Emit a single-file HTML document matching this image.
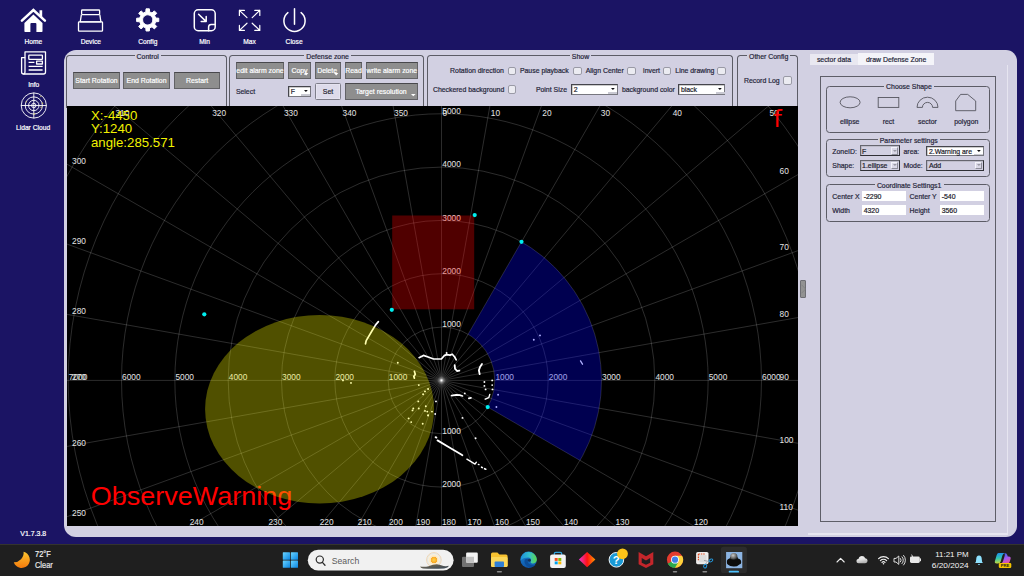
<!DOCTYPE html>
<html><head><meta charset="utf-8"><title>Lidar</title>
<style>
html,body{margin:0;padding:0;}
body{width:1024px;height:576px;overflow:hidden;background:#1b1464;position:relative;font-family:"Liberation Sans",sans-serif;}
.a{position:absolute;box-sizing:border-box;}
.t{position:absolute;white-space:nowrap;transform-origin:0 50%;-webkit-text-stroke:0.2px currentColor;}
.gb{position:absolute;box-sizing:border-box;border:1px solid #5c5c66;border-radius:3.5px;}
.btn{position:absolute;box-sizing:border-box;background:#8e8e8e;border:1px solid #626266;border-top-color:#48484c;}
.cb{position:absolute;box-sizing:border-box;background:#ebebf1;border:1px solid #9a9aa6;border-radius:2px;}
.cmb{position:absolute;box-sizing:border-box;background:#fff;border:1px solid #45454c;border-right-color:#77777f;border-bottom-color:#77777f;box-shadow:inset 0.5px 0.5px 0 #999;}
.cmbd{position:absolute;box-sizing:border-box;background:#d2d0e2;border:1px solid #66666f;border-right-color:#303036;border-bottom-color:#303036;box-shadow:inset 0.6px 0.6px 0 #a9a9b4;}
.inp{position:absolute;box-sizing:border-box;background:#fff;}
svg{position:absolute;overflow:visible;}
</style></head><body>

<svg width="1024" height="140" style="left:0;top:0" viewBox="0 0 1024 140">
<path d="M21.9 20.7 L33.4 10 L44.9 20.7" fill="none" stroke="#fff" stroke-width="2.5" stroke-linecap="round" stroke-linejoin="miter"/>
<g fill="#fff" stroke="none">
<path d="M39.5 10.3 H42.2 V17.4 L39.5 14.8 Z"/>
<path d="M24.4 23 L33.4 14.6 L42.5 23 V31.2 Q42.5 31.9 41.8 31.9 H36.4 V24 Q36.4 23 35.4 23 H31.4 Q30.4 23 30.4 24 V31.9 H25.1 Q24.4 31.9 24.4 31.2 Z"/>
</g>
<g fill="none" stroke="#fff" stroke-width="1.3" stroke-linejoin="round">
<rect x="81.6" y="10" width="18" height="4.6" rx="0.8"/>
<path d="M81.4 14.6 L80.2 21.8 H100.9 L99.8 14.6"/>
<rect x="78.5" y="21.8" width="24" height="9.4" rx="0.8"/>
</g>
<path d="M145.83 11.92 L146.03 8.83 L149.37 8.83 L149.57 11.92 L152.02 12.93 L154.35 10.89 L156.71 13.25 L154.67 15.58 L155.68 18.03 L158.77 18.23 L158.77 21.57 L155.68 21.77 L154.67 24.22 L156.71 26.55 L154.35 28.91 L152.02 26.87 L149.57 27.88 L149.37 30.97 L146.03 30.97 L145.83 27.88 L143.38 26.87 L141.05 28.91 L138.69 26.55 L140.73 24.22 L139.72 21.77 L136.63 21.57 L136.63 18.23 L139.72 18.03 L140.73 15.58 L138.69 13.25 L141.05 10.89 L143.38 12.93 Z M147.70 14.80 a5.1 5.1 0 1 0 0.01 0 Z" fill="#fff" fill-rule="evenodd" stroke="#fff" stroke-width="1.0" stroke-linejoin="round"/>
<g fill="none" stroke="#fff" stroke-width="1.5" stroke-linecap="round" stroke-linejoin="round">
<rect x="194.3" y="9.8" width="20.9" height="20.9" rx="3.8"/>
<path d="M198.6 14.2 L206 21.4 M206.2 16.6 V21.6 H201.2"/>
<path d="M215.2 24.4 H211.2 Q208.6 24.4 208.6 27 V30.7"/>
</g>
<g fill="none" stroke="#fff" stroke-width="1.2" stroke-linecap="round" stroke-linejoin="round">
<path d="M247.0 17.6 L239.4 10.4 M239.4 10.4 H244.4 M239.4 10.4 V15.4"/>
<path d="M252.2 17.6 L259.8 10.4 M259.8 10.4 H254.8 M259.8 10.4 V15.4"/>
<path d="M247.0 23.2 L239.4 30.4 M239.4 30.4 H244.4 M239.4 30.4 V25.4"/>
<path d="M252.2 23.2 L259.8 30.4 M259.8 30.4 H254.8 M259.8 30.4 V25.4"/>
</g>
<g fill="none" stroke="#fff" stroke-width="1.5" stroke-linecap="round">
<path d="M287.9 12.6 A10.6 10.6 0 1 0 301.1 12.6"/>
<path d="M294.5 8.8 V24.3"/>
</g>
<g fill="none" stroke="#fff" stroke-width="1.3" stroke-linejoin="round">
<path d="M25 51.9 H45.5 V72 Q45.5 74 43.5 74 H23.6 Q21.6 74 21.6 72 V57.6 H25 Z"/>
<path d="M25 57.6 V71.5 Q25 74 23.4 74"/>
<rect x="28.8" y="55.1" width="13.6" height="4.2" rx="0.6"/>
<rect x="36.6" y="61.2" width="5.8" height="2.8"/>
<path d="M28.6 62.4 H34.4 M28.6 66.4 H42.6 M28.6 70 H42.6"/>
</g>
<g fill="none" stroke="#fff" stroke-width="0.9">
<circle cx="33.8" cy="105.5" r="12.6"/>
<circle cx="33.8" cy="105.5" r="8.6"/>
<circle cx="33.8" cy="105.5" r="5.2"/>
<circle cx="33.8" cy="105.5" r="2.2"/>
<path d="M21 105.5 H46.6 M33.8 92.7 V118.3"/>
</g>
<g fill="#e8d44a"><circle cx="26.2" cy="101.8" r="0.6"/><circle cx="42.6" cy="103.2" r="0.6"/><circle cx="41" cy="107.2" r="0.6"/><circle cx="34.3" cy="113.9" r="0.6"/><circle cx="40.8" cy="96.6" r="0.5"/></g>
</svg>
<span class="t" style="left:24.53px;top:37.71px;font-size:6.65px;line-height:7.98px;color:#ffffff;">Home</span>
<span class="t" style="left:80.64px;top:37.71px;font-size:6.65px;line-height:7.98px;color:#ffffff;">Device</span>
<span class="t" style="left:138.19px;top:37.71px;font-size:6.65px;line-height:7.98px;color:#ffffff;">Config</span>
<span class="t" style="left:199.14px;top:37.71px;font-size:6.65px;line-height:7.98px;color:#ffffff;">Min</span>
<span class="t" style="left:243.22px;top:37.71px;font-size:6.65px;line-height:7.98px;color:#ffffff;">Max</span>
<span class="t" style="left:285.60px;top:37.71px;font-size:6.65px;line-height:7.98px;color:#ffffff;">Close</span>
<span class="t" style="left:28.15px;top:80.61px;font-size:6.65px;line-height:7.98px;color:#ffffff;">Info</span>
<span class="t" style="left:15.97px;top:123.78px;font-size:6.70px;line-height:8.04px;color:#ffffff;">Lidar Cloud</span>
<span class="t" style="left:20.36px;top:530.13px;font-size:6.95px;line-height:8.34px;color:#ffffff;">V1.7.3.8</span>
<div class="a" style="left:63.60px;top:49.70px;width:953.20px;height:487.30px;background:#d2d0e2;border-radius:12px 11px 11px 12px;"></div>
<div class="gb" style="left:66.30px;top:55.20px;width:160.50px;height:52.40px;border-bottom:none;border-radius:3.5px 3.5px 0 0;"></div>
<div class="a" style="left:134.55px;top:51.20px;width:26.31px;height:8.00px;background:#d2d0e2;"></div>
<span class="t" style="left:136.55px;top:52.85px;font-size:6.92px;line-height:8.30px;color:#26263a;">Control</span>
<div class="gb" style="left:229.00px;top:55.20px;width:195.20px;height:52.40px;border-bottom:none;border-radius:3.5px 3.5px 0 0;"></div>
<div class="a" style="left:304.25px;top:51.20px;width:46.70px;height:8.00px;background:#d2d0e2;"></div>
<span class="t" style="left:306.25px;top:52.85px;font-size:6.92px;line-height:8.30px;color:#26263a;">Defense zone</span>
<div class="gb" style="left:427.00px;top:55.20px;width:305.50px;height:52.40px;border-bottom:none;border-radius:3.5px 3.5px 0 0;"></div>
<div class="a" style="left:569.85px;top:51.20px;width:21.31px;height:8.00px;background:#d2d0e2;"></div>
<span class="t" style="left:571.85px;top:52.85px;font-size:6.92px;line-height:8.30px;color:#26263a;">Show</span>
<div class="gb" style="left:737.20px;top:55.20px;width:61.00px;height:52.40px;border-bottom:none;border-radius:3.5px 3.5px 0 0;"></div>
<div class="a" style="left:747.09px;top:51.20px;width:43.23px;height:8.00px;background:#d2d0e2;"></div>
<span class="t" style="left:749.09px;top:52.85px;font-size:6.92px;line-height:8.30px;color:#26263a;">Other Config</span>
<div class="btn" style="left:73.20px;top:72.00px;width:46.60px;height:16.80px;"></div>
<span class="t" style="left:75.35px;top:77.35px;font-size:6.92px;line-height:8.30px;color:#fff;">Start Rotation</span>
<div class="btn" style="left:122.90px;top:72.00px;width:47.30px;height:16.80px;"></div>
<span class="t" style="left:126.55px;top:77.35px;font-size:6.92px;line-height:8.30px;color:#fff;">End Rotation</span>
<div class="btn" style="left:173.90px;top:72.00px;width:46.40px;height:16.80px;"></div>
<span class="t" style="left:185.95px;top:77.35px;font-size:6.92px;line-height:8.30px;color:#fff;">Restart</span>
<div class="btn" style="left:235.70px;top:62.00px;width:48.60px;height:16.80px;"></div>
<span class="t" style="left:236.35px;top:67.35px;font-size:6.92px;line-height:8.30px;color:#fff;">edit alarm zone</span>
<div class="btn" style="left:288.20px;top:62.00px;width:22.60px;height:16.80px;"></div>
<span class="t" style="left:291.42px;top:67.35px;font-size:6.92px;line-height:8.30px;color:#fff;">Copy</span>
<svg width="4.4" height="2.6" style="left:303.88px;top:72.76px" viewBox="0 0 4.4 2.6"><path d="M0 0 H4.4 L2.20 2.6 Z" fill="#fff"/></svg>
<div class="btn" style="left:314.60px;top:62.00px;width:26.70px;height:16.80px;"></div>
<span class="t" style="left:317.15px;top:67.35px;font-size:6.92px;line-height:8.30px;color:#fff;">Delete</span>
<svg width="4.4" height="2.6" style="left:334.38px;top:72.76px" viewBox="0 0 4.4 2.6"><path d="M0 0 H4.4 L2.20 2.6 Z" fill="#fff"/></svg>
<div class="btn" style="left:345.20px;top:62.00px;width:16.60px;height:16.80px;"></div>
<span class="t" style="left:345.23px;top:67.35px;font-size:6.92px;line-height:8.30px;color:#fff;">Read</span>
<div class="btn" style="left:365.90px;top:62.00px;width:51.90px;height:16.80px;"></div>
<span class="t" style="left:366.47px;top:67.35px;font-size:6.92px;line-height:8.30px;color:#fff;">write alarm zone</span>
<span class="t" style="left:235.90px;top:87.55px;font-size:6.92px;line-height:8.30px;color:#26263a;">Select</span>
<div class="cmb" style="left:288.20px;top:86.00px;width:22.60px;height:10.80px;"></div>
<span class="t" style="left:290.80px;top:88.45px;font-size:6.92px;line-height:8.30px;color:#22222c;">F</span>
<svg width="4" height="3" style="left:303.70px;top:90.40px" viewBox="0 0 4 3"><path d="M0 0 H3.8 L1.9 2.1 Z" fill="#101014"/></svg>
<div class="a" style="left:300.80px;top:94.40px;width:9px;height:1.4px;background:#c9c9d2"></div>
<div class="a" style="left:314.60px;top:82.50px;width:26.90px;height:17.30px;background:#dddbea;border:1px solid #7e7e8a;border-radius:1.5px;box-shadow:inset 0 0 0 0.6px #ebeaf3;"></div>
<span class="t" style="left:322.86px;top:88.10px;font-size:6.92px;line-height:8.30px;color:#22222c;">Set</span>
<div class="btn" style="left:345.20px;top:82.50px;width:72.60px;height:17.30px;"></div>
<span class="t" style="left:355.52px;top:88.10px;font-size:6.92px;line-height:8.30px;color:#fff;">Target resolution</span>
<svg width="4.6" height="2.3" style="left:410.64px;top:94.09px" viewBox="0 0 4.6 2.3"><path d="M0 0 H4.6 L2.30 2.3 Z" fill="#fff"/></svg>
<span class="t" style="left:450.10px;top:67.45px;font-size:6.92px;line-height:8.30px;color:#26263a;">Rotation direction</span>
<div class="cb" style="left:507.80px;top:66.60px;width:8.40px;height:8.60px;"></div>
<span class="t" style="left:519.90px;top:67.45px;font-size:6.92px;line-height:8.30px;color:#26263a;">Pause playback</span>
<div class="cb" style="left:573.40px;top:66.60px;width:8.40px;height:8.60px;"></div>
<span class="t" style="left:585.70px;top:67.45px;font-size:6.92px;line-height:8.30px;color:#26263a;">Align Center</span>
<div class="cb" style="left:627.20px;top:66.60px;width:8.40px;height:8.60px;"></div>
<span class="t" style="left:643.10px;top:67.45px;font-size:6.92px;line-height:8.30px;color:#26263a;">invert</span>
<div class="cb" style="left:663.00px;top:66.60px;width:8.40px;height:8.60px;"></div>
<span class="t" style="left:675.30px;top:67.45px;font-size:6.92px;line-height:8.30px;color:#26263a;">Line drawing</span>
<div class="cb" style="left:717.40px;top:66.60px;width:8.40px;height:8.60px;"></div>
<span class="t" style="left:432.90px;top:86.25px;font-size:6.92px;line-height:8.30px;color:#26263a;">Checkered background</span>
<div class="cb" style="left:507.80px;top:85.00px;width:8.40px;height:8.60px;"></div>
<span class="t" style="left:535.90px;top:86.25px;font-size:6.92px;line-height:8.30px;color:#26263a;">Point Size</span>
<div class="cmb" style="left:571.10px;top:83.60px;width:46.80px;height:11.10px;"></div>
<span class="t" style="left:573.70px;top:86.20px;font-size:6.92px;line-height:8.30px;color:#22222c;">2</span>
<svg width="4" height="3" style="left:610.80px;top:88.15px" viewBox="0 0 4 3"><path d="M0 0 H3.8 L1.9 2.1 Z" fill="#101014"/></svg>
<div class="a" style="left:607.90px;top:92.30px;width:9px;height:1.4px;background:#c9c9d2"></div>
<span class="t" style="left:621.90px;top:86.25px;font-size:6.92px;line-height:8.30px;color:#26263a;">background color</span>
<div class="cmb" style="left:678.30px;top:83.60px;width:47.20px;height:11.10px;"></div>
<span class="t" style="left:680.90px;top:86.20px;font-size:6.92px;line-height:8.30px;color:#22222c;">black</span>
<svg width="4" height="3" style="left:718.40px;top:88.15px" viewBox="0 0 4 3"><path d="M0 0 H3.8 L1.9 2.1 Z" fill="#101014"/></svg>
<div class="a" style="left:715.50px;top:92.30px;width:9px;height:1.4px;background:#c9c9d2"></div>
<span class="t" style="left:744.00px;top:76.95px;font-size:6.92px;line-height:8.30px;color:#26263a;">Record Log</span>
<div class="cb" style="left:783.20px;top:76.40px;width:8.60px;height:8.60px;"></div>
<div class="a" style="left:800.30px;top:280.30px;width:5.60px;height:17.50px;background:#929292;border:1px solid #6e6e74;border-radius:1px;"></div>
<svg width="6" height="10" style="left:800.6px;top:284px" viewBox="0 0 6 10"><path d="M0.6 0.8 L4.6 5 L0.6 9.2" fill="none" stroke="#7c7c7c" stroke-width="0.7"/></svg>
<div class="a" style="left:809.80px;top:53.80px;width:48.60px;height:10.80px;background:#e9e8f1;"></div>
<span class="t" style="left:816.88px;top:55.95px;font-size:6.92px;line-height:8.30px;color:#26263a;">sector data</span>
<div class="a" style="left:858.40px;top:52.60px;width:75.40px;height:12.00px;background:#f4f4f9;"></div>
<span class="t" style="left:866.01px;top:55.55px;font-size:6.92px;line-height:8.30px;color:#26263a;">draw Defense Zone</span>
<div class="a" style="left:1006.80px;top:65.00px;width:1.50px;height:469.60px;background:#e6e5f0;"></div>
<div class="a" style="left:808.00px;top:533.20px;width:200.30px;height:1.40px;background:#e6e5f0;"></div>
<div class="a" style="left:820.00px;top:76.40px;width:176.20px;height:445.40px;border:1px solid #5e5e68;"></div>
<div class="gb" style="left:825.80px;top:85.80px;width:164.20px;height:46.80px;"></div>
<div class="a" style="left:884.20px;top:81.80px;width:49.60px;height:8.00px;background:#d2d0e2;"></div>
<span class="t" style="left:886.11px;top:83.45px;font-size:6.92px;line-height:8.30px;color:#26263a;">Choose Shape</span>
<svg width="180" height="30" style="left:820px;top:90px" viewBox="820 90 180 30"><g fill="none" stroke="#55555e" stroke-width="0.9">
<ellipse cx="850.1" cy="102.3" rx="10" ry="5.5"/>
<rect x="878.2" y="97.5" width="20.6" height="9.9"/>
<path d="M917 107.4 A10.5 10.2 0 0 1 938 107.4 H932.6 A5.1 5 0 0 0 922.4 107.4 Z"/>
<path d="M955.7 110.7 V101 L960.6 94.4 H967.7 L975.7 101 V110.7 Z"/>
</g></svg>
<span class="t" style="left:839.89px;top:118.35px;font-size:6.92px;line-height:8.30px;color:#26263a;">ellipse</span>
<span class="t" style="left:882.63px;top:118.35px;font-size:6.92px;line-height:8.30px;color:#26263a;">rect</span>
<span class="t" style="left:917.98px;top:118.35px;font-size:6.92px;line-height:8.30px;color:#26263a;">sector</span>
<span class="t" style="left:954.18px;top:118.35px;font-size:6.92px;line-height:8.30px;color:#26263a;">polygon</span>
<div class="gb" style="left:825.80px;top:139.00px;width:164.20px;height:38.00px;"></div>
<div class="a" style="left:877.55px;top:135.00px;width:62.50px;height:8.00px;background:#d2d0e2;"></div>
<span class="t" style="left:879.76px;top:136.65px;font-size:6.92px;line-height:8.30px;color:#26263a;">Parameter settings</span>
<span class="t" style="left:832.30px;top:147.55px;font-size:6.92px;line-height:8.30px;color:#26263a;">ZoneID:</span>
<div class="cmbd" style="left:859.50px;top:145.00px;width:40.10px;height:11.20px;"></div>
<span class="t" style="left:862.10px;top:147.65px;font-size:6.92px;line-height:8.30px;color:#22222c;">F</span>
<div class="a" style="left:891.10px;top:146.60px;width:7.10px;height:8.20px;background:#dad8e7;border:1px solid #f4f4fa;border-right-color:#8c8c98;border-bottom-color:#8c8c98;"></div>
<svg width="4" height="3" style="left:892.80px;top:149.60px" viewBox="0 0 4 3"><path d="M0 0 H3.8 L1.9 2.1 Z" fill="#9a9aa4"/></svg>
<span class="t" style="left:903.50px;top:147.55px;font-size:6.92px;line-height:8.30px;color:#26263a;">area:</span>
<div class="cmb" style="left:926.30px;top:145.60px;width:57.30px;height:10.80px;"></div>
<span class="t" style="left:928.90px;top:148.05px;font-size:6.92px;line-height:8.30px;color:#22222c;">2.Warning are</span>
<svg width="4" height="3" style="left:976.50px;top:150.00px" viewBox="0 0 4 3"><path d="M0 0 H3.8 L1.9 2.1 Z" fill="#101014"/></svg>
<div class="a" style="left:973.60px;top:154.00px;width:9px;height:1.4px;background:#c9c9d2"></div>
<span class="t" style="left:832.30px;top:161.95px;font-size:6.92px;line-height:8.30px;color:#26263a;">Shape:</span>
<div class="cmbd" style="left:859.50px;top:160.00px;width:40.10px;height:10.90px;"></div>
<span class="t" style="left:862.10px;top:161.80px;font-size:6.92px;line-height:8.30px;color:#22222c;">1.ellipse</span>
<div class="a" style="left:891.10px;top:161.60px;width:7.10px;height:7.90px;background:#dad8e7;border:1px solid #f4f4fa;border-right-color:#8c8c98;border-bottom-color:#8c8c98;"></div>
<svg width="4" height="3" style="left:892.80px;top:164.45px" viewBox="0 0 4 3"><path d="M0 0 H3.8 L1.9 2.1 Z" fill="#9a9aa4"/></svg>
<span class="t" style="left:903.50px;top:161.95px;font-size:6.92px;line-height:8.30px;color:#26263a;">Mode:</span>
<div class="cmbd" style="left:926.30px;top:160.00px;width:57.30px;height:10.90px;"></div>
<span class="t" style="left:928.90px;top:161.80px;font-size:6.92px;line-height:8.30px;color:#22222c;">Add</span>
<div class="a" style="left:975.10px;top:161.60px;width:7.10px;height:7.90px;background:#dad8e7;border:1px solid #f4f4fa;border-right-color:#8c8c98;border-bottom-color:#8c8c98;"></div>
<svg width="4" height="3" style="left:976.80px;top:164.45px" viewBox="0 0 4 3"><path d="M0 0 H3.8 L1.9 2.1 Z" fill="#9a9aa4"/></svg>
<div class="gb" style="left:825.80px;top:184.10px;width:164.20px;height:38.30px;"></div>
<div class="a" style="left:874.60px;top:180.10px;width:69.20px;height:8.00px;background:#d2d0e2;"></div>
<span class="t" style="left:876.89px;top:181.75px;font-size:6.92px;line-height:8.30px;color:#26263a;">Coordinate Settings1</span>
<span class="t" style="left:832.30px;top:192.55px;font-size:6.92px;line-height:8.30px;color:#26263a;">Center X</span>
<div class="inp" style="left:862.10px;top:190.60px;width:43.80px;height:10.80px;"></div>
<span class="t" style="left:863.70px;top:192.55px;font-size:6.92px;line-height:8.30px;color:#22222c;">-2290</span>
<span class="t" style="left:909.60px;top:192.55px;font-size:6.92px;line-height:8.30px;color:#26263a;">Center Y</span>
<div class="inp" style="left:940.10px;top:190.60px;width:43.70px;height:10.80px;"></div>
<span class="t" style="left:941.70px;top:192.55px;font-size:6.92px;line-height:8.30px;color:#22222c;">-540</span>
<span class="t" style="left:832.30px;top:206.65px;font-size:6.92px;line-height:8.30px;color:#26263a;">Width</span>
<div class="inp" style="left:862.10px;top:204.60px;width:43.80px;height:10.80px;"></div>
<span class="t" style="left:863.70px;top:206.55px;font-size:6.92px;line-height:8.30px;color:#22222c;">4320</span>
<span class="t" style="left:909.60px;top:206.65px;font-size:6.92px;line-height:8.30px;color:#26263a;">Height</span>
<div class="inp" style="left:940.10px;top:204.60px;width:43.70px;height:10.80px;"></div>
<span class="t" style="left:941.70px;top:206.55px;font-size:6.92px;line-height:8.30px;color:#22222c;">3560</span>
<svg width="730.90" height="420.00" style="left:67.00px;top:105.60px;overflow:hidden;background:#000" viewBox="67.00 105.60 730.90 420.00">
<g fill="none" stroke="rgba(255,255,255,0.22)" stroke-width="0.8">
<circle cx="441.50" cy="380.00" r="53.33"/>
<circle cx="441.50" cy="380.00" r="106.66"/>
<circle cx="441.50" cy="380.00" r="159.99"/>
<circle cx="441.50" cy="380.00" r="213.32"/>
<circle cx="441.50" cy="380.00" r="266.65"/>
<circle cx="441.50" cy="380.00" r="319.98"/>
<circle cx="441.50" cy="380.00" r="373.31"/>
<circle cx="441.50" cy="380.00" r="426.64"/>
<circle cx="441.50" cy="380.00" r="479.97"/>
<path d="M441.50 380.00 L441.50 -220.00 M441.50 380.00 L545.69 -210.88 M441.50 380.00 L646.71 -183.82 M441.50 380.00 L741.50 -139.62 M441.50 380.00 L827.17 -79.63 M441.50 380.00 L901.13 -5.67 M441.50 380.00 L961.12 80.00 M441.50 380.00 L1005.32 174.79 M441.50 380.00 L1032.38 275.81 M441.50 380.00 L1041.50 380.00 M441.50 380.00 L1032.38 484.19 M441.50 380.00 L1005.32 585.21 M441.50 380.00 L961.12 680.00 M441.50 380.00 L901.13 765.67 M441.50 380.00 L827.17 839.63 M441.50 380.00 L741.50 899.62 M441.50 380.00 L646.71 943.82 M441.50 380.00 L545.69 970.88 M441.50 380.00 L441.50 980.00 M441.50 380.00 L337.31 970.88 M441.50 380.00 L236.29 943.82 M441.50 380.00 L141.50 899.62 M441.50 380.00 L55.83 839.63 M441.50 380.00 L-18.13 765.67 M441.50 380.00 L-78.12 680.00 M441.50 380.00 L-122.32 585.21 M441.50 380.00 L-149.38 484.19 M441.50 380.00 L-158.50 380.00 M441.50 380.00 L-149.38 275.81 M441.50 380.00 L-122.32 174.79 M441.50 380.00 L-78.12 80.00 M441.50 380.00 L-18.13 -5.67 M441.50 380.00 L55.83 -79.63 M441.50 380.00 L141.50 -139.62 M441.50 380.00 L236.29 -183.82 M441.50 380.00 L337.31 -210.88 "/>
</g>
<defs><radialGradient id="cg"><stop offset="0" stop-color="#fff" stop-opacity="0.9"/><stop offset="0.35" stop-color="#fff" stop-opacity="0.25"/><stop offset="1" stop-color="#fff" stop-opacity="0"/></radialGradient></defs>
<circle cx="441.50" cy="380.00" r="4.5" fill="url(#cg)"/>
<g font-family="Liberation Sans, sans-serif" font-size="8.35" fill="#e4e4e4">
<text x="495.43" y="379.80" text-anchor="start">1000</text>
<text x="388.77" y="379.80" text-anchor="start">1000</text>
<text x="442.30" y="326.97" text-anchor="start">1000</text>
<text x="442.30" y="433.63" text-anchor="start">1000</text>
<text x="548.76" y="379.80" text-anchor="start">2000</text>
<text x="335.44" y="379.80" text-anchor="start">2000</text>
<text x="442.30" y="273.64" text-anchor="start">2000</text>
<text x="442.30" y="486.96" text-anchor="start">2000</text>
<text x="602.09" y="379.80" text-anchor="start">3000</text>
<text x="282.11" y="379.80" text-anchor="start">3000</text>
<text x="442.30" y="220.31" text-anchor="start">3000</text>
<text x="655.42" y="379.80" text-anchor="start">4000</text>
<text x="228.78" y="379.80" text-anchor="start">4000</text>
<text x="442.30" y="166.98" text-anchor="start">4000</text>
<text x="708.75" y="379.80" text-anchor="start">5000</text>
<text x="175.45" y="379.80" text-anchor="start">5000</text>
<text x="442.30" y="113.65" text-anchor="start">5000</text>
<text x="762.08" y="379.80" text-anchor="start">6000</text>
<text x="122.12" y="379.80" text-anchor="start">6000</text>
<text x="68.79" y="379.80" text-anchor="start">7000</text>
<text x="442.40" y="116.00" text-anchor="start">0</text>
<text x="490.78" y="116.00" text-anchor="start">10</text>
<text x="542.27" y="116.00" text-anchor="start">20</text>
<text x="600.82" y="116.00" text-anchor="start">30</text>
<text x="672.65" y="116.00" text-anchor="start">40</text>
<text x="769.42" y="116.00" text-anchor="start">50</text>
<text x="779.60" y="173.83" text-anchor="start">60</text>
<text x="779.60" y="249.88" text-anchor="start">70</text>
<text x="779.60" y="316.76" text-anchor="start">80</text>
<text x="779.60" y="379.60" text-anchor="start">90</text>
<text x="779.60" y="442.44" text-anchor="start">100</text>
<text x="779.60" y="509.32" text-anchor="start">110</text>
<text x="694.09" y="525.00" text-anchor="start">120</text>
<text x="615.42" y="525.00" text-anchor="start">130</text>
<text x="564.07" y="525.00" text-anchor="start">140</text>
<text x="525.96" y="525.00" text-anchor="start">150</text>
<text x="494.89" y="525.00" text-anchor="start">160</text>
<text x="467.57" y="525.00" text-anchor="start">170</text>
<text x="441.90" y="525.00" text-anchor="start">180</text>
<text x="416.23" y="525.00" text-anchor="start">190</text>
<text x="388.91" y="525.00" text-anchor="start">200</text>
<text x="357.84" y="525.00" text-anchor="start">210</text>
<text x="319.73" y="525.00" text-anchor="start">220</text>
<text x="268.38" y="525.00" text-anchor="start">230</text>
<text x="189.71" y="525.00" text-anchor="start">240</text>
<text x="72.10" y="516.01" text-anchor="start">250</text>
<text x="72.10" y="445.73" text-anchor="start">260</text>
<text x="72.10" y="379.70" text-anchor="start">270</text>
<text x="72.10" y="313.67" text-anchor="start">280</text>
<text x="72.10" y="243.39" text-anchor="start">290</text>
<text x="72.10" y="163.48" text-anchor="start">300</text>
<text x="115.38" y="116.00" text-anchor="start">310</text>
<text x="212.15" y="116.00" text-anchor="start">320</text>
<text x="283.98" y="116.00" text-anchor="start">330</text>
<text x="342.53" y="116.00" text-anchor="start">340</text>
<text x="394.02" y="116.00" text-anchor="start">350</text>
</g>
<polyline points="419.1,357.3 423.4,355.0 428.1,356.6 433.6,358.6 441.4,358.6 444.5,355.0 446.9,354.2 450.0,354.7 452.3,353.8 454.7,356.6 456.2,359.4" fill="none" stroke="#fff" stroke-width="1.7" stroke-linecap="round" stroke-linejoin="round"/>
<polyline points="454.7,364.7 455.0,368.3 457.0,370.6 459.4,370.3" fill="none" stroke="#fff" stroke-width="1.8" stroke-linecap="round" stroke-linejoin="round"/>
<polyline points="482.0,363.6 480.0,366.7 478.9,369.8 479.7,373.8" fill="none" stroke="#fff" stroke-width="1.8" stroke-linecap="round" stroke-linejoin="round"/>
<polyline points="489.8,394.0 488.8,397.2 485.2,398.8" fill="none" stroke="#fff" stroke-width="1.4" stroke-linecap="round" stroke-linejoin="round"/>
<polyline points="451.6,395.3 456.2,394.4 460.2,394.8 462.5,395.6" fill="none" stroke="#fff" stroke-width="1.7" stroke-linecap="round" stroke-linejoin="round"/>
<polyline points="468.8,398.0 471.0,397.5" fill="none" stroke="#fff" stroke-width="1.6" stroke-linecap="round" stroke-linejoin="round"/>
<polyline points="414.4,371.0 415.3,373.8 413.8,376.0 414.4,377.7" fill="none" stroke="#fff" stroke-width="1.7" stroke-linecap="round" stroke-linejoin="round"/>
<polyline points="378.4,321.2 375.8,324.2 371.9,330.6 366.2,340.2 365.5,343.4" fill="none" stroke="#fff" stroke-width="1.7" stroke-linecap="round" stroke-linejoin="round"/>
<polyline points="437.5,440.0 449.0,446.8 461.3,454.2 462.4,454.9" fill="none" stroke="#fff" stroke-width="1.8" stroke-linecap="round" stroke-linejoin="round"/>
<polyline points="435.6,436.8 436.4,437.2" fill="none" stroke="#fff" stroke-width="1.9" stroke-linecap="round" stroke-linejoin="round"/>
<polyline points="466.9,458.8 471.0,461.3 475.0,463.7 476.4,461.8" fill="none" stroke="#fff" stroke-width="1.4" stroke-linecap="round" stroke-linejoin="round"/>
<polyline points="478.3,464.0 479.0,464.3" fill="none" stroke="#fff" stroke-width="1.3" stroke-linecap="round" stroke-linejoin="round"/>
<polyline points="481.6,466.8 482.4,467.2" fill="none" stroke="#fff" stroke-width="1.6" stroke-linecap="round" stroke-linejoin="round"/>
<polyline points="484.6,468.3 485.8,468.8" fill="none" stroke="#fff" stroke-width="1.6" stroke-linecap="round" stroke-linejoin="round"/>
<polyline points="580.5,360.5 582.5,363.8" fill="none" stroke="#fff" stroke-width="1.3" stroke-linecap="round" stroke-linejoin="round"/>
<g fill="#fff">
<circle cx="484.4" cy="381.6" r="0.95"/>
<circle cx="484.4" cy="385.5" r="0.95"/>
<circle cx="492.2" cy="380.0" r="0.95"/>
<circle cx="492.2" cy="384.7" r="0.95"/>
<circle cx="485.6" cy="389.0" r="0.95"/>
<circle cx="492.5" cy="389.0" r="0.95"/>
<circle cx="464.8" cy="393.0" r="0.95"/>
<circle cx="418.8" cy="384.7" r="0.95"/>
<circle cx="423.1" cy="393.8" r="0.95"/>
<circle cx="425.0" cy="391.0" r="0.95"/>
<circle cx="428.1" cy="388.6" r="0.95"/>
<circle cx="418.3" cy="401.0" r="0.95"/>
<circle cx="413.3" cy="408.1" r="0.95"/>
<circle cx="412.5" cy="410.0" r="0.95"/>
<circle cx="418.8" cy="408.1" r="0.95"/>
<circle cx="425.8" cy="405.8" r="0.95"/>
<circle cx="425.0" cy="410.5" r="0.95"/>
<circle cx="427.3" cy="411.2" r="0.95"/>
<circle cx="432.0" cy="411.2" r="0.95"/>
<circle cx="428.1" cy="415.2" r="0.95"/>
<circle cx="408.6" cy="418.0" r="0.95"/>
<circle cx="436.0" cy="401.0" r="0.95"/>
<circle cx="435.2" cy="413.6" r="0.95"/>
<circle cx="462.5" cy="417.5" r="0.95"/>
<circle cx="498.1" cy="394.4" r="0.95"/>
<circle cx="496.4" cy="406.6" r="0.95"/>
<circle cx="533.8" cy="339.4" r="0.95"/>
<circle cx="540.0" cy="335.0" r="0.95"/>
<circle cx="343.0" cy="380.0" r="0.95"/>
<circle cx="351.0" cy="382.5" r="0.95"/>
<circle cx="397.8" cy="362.4" r="0.95"/>
<circle cx="446.6" cy="352.6" r="0.95"/>
<circle cx="475.6" cy="437.8" r="0.95"/>
<circle cx="411.2" cy="421.7" r="0.95"/>
<circle cx="422.7" cy="423.3" r="0.95"/>
<circle cx="428.1" cy="414.7" r="0.95"/>
</g>
<g font-family="Liberation Sans, sans-serif">
<text x="91" y="119.9" font-size="13.25" fill="#f2f200">X:-4450</text>
<text x="91" y="133.1" font-size="13.25" fill="#f2f200">Y:1240</text>
<text x="91" y="146.4" font-size="13.25" fill="#f2f200">angle:285.571</text>
<text x="90.8" y="504.8" font-size="26" fill="#ff0000" textLength="201.4" lengthAdjust="spacingAndGlyphs">ObserveWarning</text>
</g>
<text x="773.4" y="126.2" font-family="DejaVu Sans, sans-serif" font-size="23.4" fill="#ff0000">f</text>
<ellipse cx="319.60" cy="408.85" rx="114.50" ry="94.25" fill="rgba(255,255,0,0.314)"/>
<rect x="392.2" y="215.1" width="82.0" height="93.8" fill="rgba(255,0,0,0.314)"/>
<path d="M468.17 333.81 L521.50 241.44 A159.99 159.99 0 0 1 580.06 459.99 L487.69 406.66 A53.33 53.33 0 0 0 468.17 333.81 Z" fill="rgba(0,0,255,0.314)"/>
<g fill="#00eeee">
<circle cx="474.7" cy="214.7" r="2.1"/>
<circle cx="391.8" cy="309.4" r="2.1"/>
<circle cx="521.5" cy="241.4" r="2.1"/>
<circle cx="487.7" cy="406.7" r="2.1"/>
<circle cx="204.3" cy="313.9" r="2.1"/>
</g>
</svg>
<div class="a" style="left:0.00px;top:544.00px;width:1024.00px;height:32.00px;background:#1f1f1f;border-top:1px solid #34342e;"></div>
<svg width="1024" height="32" style="left:0;top:544px" viewBox="0 544 1024 32">
<defs><linearGradient id="mn" x1="0" y1="0" x2="0" y2="1"><stop offset="0" stop-color="#fcc530"/><stop offset="1" stop-color="#f57a0c"/></linearGradient>
<linearGradient id="wn" x1="0" y1="0" x2="1" y2="1"><stop offset="0" stop-color="#6ad4ff"/><stop offset="1" stop-color="#0a84e0"/></linearGradient></defs>
<path d="M23.6 551.8 A8.2 8.2 0 1 1 13.8 562.2 A9.6 9.6 0 0 0 23.6 551.8 Z" fill="url(#mn)"/>
<rect x="282.8" y="552.3" width="7.2" height="7.4" rx="0.5" fill="url(#wn)"/>
<rect x="290.8" y="552.3" width="7.2" height="7.4" rx="0.5" fill="url(#wn)"/>
<rect x="282.8" y="560.4" width="7.2" height="7.4" rx="0.5" fill="url(#wn)"/>
<rect x="290.8" y="560.4" width="7.2" height="7.4" rx="0.5" fill="url(#wn)"/>
<rect x="307.8" y="549.8" width="145.8" height="20.8" rx="10.4" fill="#f1f1f1"/>
<circle cx="319.8" cy="559.6" r="3.6" fill="none" stroke="#2a2a2a" stroke-width="1.2"/><path d="M322.4 562.4 L325 565.2" stroke="#2a2a2a" stroke-width="1.3" stroke-linecap="round"/>
<text x="331.8" y="563.8" font-family="Liberation Sans, sans-serif" font-size="8.6" fill="#5a5a5a" textLength="27.4" lengthAdjust="spacingAndGlyphs">Search</text>
<defs><radialGradient id="sun"><stop offset="0" stop-color="#ffd24a"/><stop offset="0.45" stop-color="#f9a825"/><stop offset="0.5" stop-color="#fbe3b6"/><stop offset="0.8" stop-color="#fdf1dc"/><stop offset="1" stop-color="#f7f3ee"/></radialGradient><linearGradient id="hill" x1="0" y1="0" x2="1" y2="1"><stop offset="0" stop-color="#7a6a4e"/><stop offset="1" stop-color="#37485a"/></linearGradient></defs>
<circle cx="433.9" cy="559.9" r="6.8" fill="url(#sun)"/><circle cx="433.9" cy="559.9" r="7.3" fill="none" stroke="#f0c48c" stroke-width="0.6"/><circle cx="433.9" cy="559.9" r="6.3" fill="none" stroke="#b9d7ee" stroke-width="0.4"/>
<path d="M420.2 566.4 Q424 567.2 428.6 566.2 Q433 564.4 436.8 564.2 Q440.4 565 443.6 566 Q446.4 566.4 448.8 565.8 Q448.2 568 444 568.4 Q432 569.2 423 568.4 Q420.4 567.8 420.2 566.4 Z" fill="url(#hill)"/>
<rect x="462" y="556.7" width="12" height="10.3" rx="1.1" fill="#727272"/><rect x="466.1" y="552.6" width="11.7" height="10.2" rx="1.1" fill="#f4f4f4"/><path d="M466.1 556.7 H474 V562.8 H467.2 Q466.1 562.8 466.1 561.7 Z" fill="#c2c2c2"/>
<path d="M491 554.2 Q491 552.6 492.6 552.6 H497.4 L499.4 554.6 H506 Q507.6 554.6 507.6 556.2 V565.4 Q507.6 567 506 567 H492.6 Q491 567 491 565.4 Z" fill="#f7c230"/>
<rect x="491" y="557" width="16.6" height="10" rx="1.4" fill="#fbd75a"/><rect x="494.6" y="561.6" width="9.4" height="5.4" rx="0.8" fill="#2f7fd6"/>
<rect x="496.8" y="571" width="5.2" height="1.6" rx="0.8" fill="#8a8a8a"/>
<defs><linearGradient id="eg1" x1="0" y1="0" x2="1" y2="0"><stop offset="0" stop-color="#1c8fe0"/><stop offset="0.55" stop-color="#35c1c9"/><stop offset="1" stop-color="#5fd848"/></linearGradient><linearGradient id="eg2" x1="0" y1="0" x2="0" y2="1"><stop offset="0" stop-color="#1a8ad8"/><stop offset="1" stop-color="#0f55a8"/></linearGradient></defs>
<circle cx="528.6" cy="559.75" r="8.2" fill="url(#eg2)"/>
<path d="M520.5 560.6 A8.2 8.2 0 0 1 536.8 559 Q537 563 533.2 563.4 Q530.4 563.4 530.6 561.4 Q532 558.2 528.6 557.6 Q523.4 557.4 520.5 560.6 Z" fill="url(#eg1)"/>
<path d="M524.6 559.8 Q523.4 565.2 529.4 567.4 Q532.8 567.8 535.6 565 Q531 566.2 528.4 563.2 Q527 561 528.6 558.8 Q526 558.4 524.6 559.8 Z" fill="#0b4d98"/>
<circle cx="529.4" cy="560.2" r="1.5" fill="#12335c"/>
<path d="M554.3 555.4 V553.8 Q554.3 552.3 555.8 552.3 H560.2 Q561.7 552.3 561.7 553.8 V555.4" fill="none" stroke="#2fa3dd" stroke-width="1.3"/>
<rect x="550.1" y="554.6" width="15.7" height="13.3" rx="2" fill="#f3f3f3"/>
<rect x="554.7" y="558" width="3" height="2.9" fill="#f25022"/><rect x="558.3" y="558" width="3" height="2.9" fill="#7fba00"/><rect x="554.7" y="561.5" width="3" height="2.8" fill="#00a4ef"/><rect x="558.3" y="561.5" width="3" height="2.8" fill="#ffb900"/>
<defs><linearGradient id="dm" x1="0" y1="0" x2="1" y2="0"><stop offset="0" stop-color="#e63ad6"/><stop offset="0.5" stop-color="#ff1212"/><stop offset="1" stop-color="#ff9d00"/></linearGradient></defs>
<path d="M587.1 552 L595.4 559.6 L587.1 567.3 L578.9 559.6 Z" fill="url(#dm)"/>
<circle cx="616.4" cy="559.8" r="7.3" fill="#1a9ad6" stroke="#f2f8fc" stroke-width="1"/>
<text x="616.2" y="564" text-anchor="middle" font-family="Liberation Sans, sans-serif" font-weight="bold" font-size="11.5" fill="#fff">?</text>
<circle cx="622.5" cy="553.8" r="5.4" fill="#fcc419"/>
<path d="M638.6 552 L646 556.2 L653.3 552 V564.2 L646 567.9 L638.6 564.2 Z M641.7 558.1 V562.7 L646 564.8 L650.2 562.7 V558.1 L646 560.4 Z" fill="#c4262b" fill-rule="evenodd"/>
<circle cx="675" cy="559.7" r="8.1" fill="#e33b2e"/>
<path d="M675 559.7 L667.98 563.75 A8.1 8.1 0 0 0 675 567.8 L679.05 563.75 Z" fill="#2da94f"/>
<path d="M667.98 563.75 A8.1 8.1 0 0 0 675 567.8 L678.6 561.7 L675 559.7 Z" fill="#2da94f"/>
<path d="M675 567.8 A8.1 8.1 0 0 0 682.02 555.65 H675 L678.6 561.7 Z" fill="#fdd23c"/>
<circle cx="675" cy="559.7" r="3.9" fill="#fff"/><circle cx="675" cy="559.7" r="3.1" fill="#3f7fe8"/>
<rect x="672.8" y="570.9" width="4.4" height="1.6" rx="0.8" fill="#8a8a8a"/>
<rect x="696.1" y="552" width="12.4" height="12.2" rx="1.6" fill="#ececec"/><rect x="699.2" y="555" width="7.4" height="7.2" fill="#dcdcdc"/>
<path d="M698.4 554 H705.6 M698.4 554 V561" fill="none" stroke="#e04a1e" stroke-width="1.2" stroke-dasharray="1.5 0.9"/>
<path d="M704 560.4 L709 561.6 M706.6 562.4 L705.4 564.6" stroke="#9a9aa0" stroke-width="0.9"/>
<ellipse cx="710.9" cy="560.4" rx="2" ry="1.3" fill="none" stroke="#23a0ea" stroke-width="0.9" transform="rotate(-25 710.9 560.4)"/><ellipse cx="705.2" cy="566.1" rx="1.5" ry="1.9" fill="none" stroke="#23a0ea" stroke-width="0.9" transform="rotate(25 705.2 566.1)"/>
<rect x="702.4" y="570.9" width="4.8" height="1.6" rx="0.8" fill="#8a8a8a"/>
<rect x="720.9" y="546.8" width="26" height="26.2" rx="2.6" fill="#2c2c2c"/>
<defs><radialGradient id="dome" cx="0.4" cy="0.35" r="0.7"><stop offset="0" stop-color="#c8c8c8"/><stop offset="0.6" stop-color="#6a6a6a"/><stop offset="1" stop-color="#1c1c1c"/></radialGradient></defs>
<rect x="726.1" y="552" width="16.2" height="16.2" fill="#8cb4e2"/>
<path d="M726.9 562.2 Q726.6 559.2 729.6 558.6 L730.4 557 H737.2 L738 558.6 Q741.2 559.2 741.2 562.2 Q741.4 564 739.4 564.4 Q737 566.8 733.6 566.6 Q729.8 566.6 727.8 564.6 Q726.8 563.8 726.9 562.2 Z" fill="#0c0c0c"/>
<path d="M730.2 559 V556.6 A3.6 3.6 0 0 1 737.4 556.6 V559 Q733.8 560.6 730.2 559 Z" fill="url(#dome)"/>
<rect x="728.7" y="570.7" width="10.3" height="1.9" rx="0.95" fill="#4cc2ff"/>
<path d="M837 562 L840.6 558.4 L844.2 562" fill="none" stroke="#f0f0f0" stroke-width="1.1" stroke-linecap="round" stroke-linejoin="round"/>
<defs><linearGradient id="cld" x1="0" y1="0" x2="0.3" y2="1"><stop offset="0" stop-color="#f4f4f4"/><stop offset="0.55" stop-color="#e2e2e2"/><stop offset="1" stop-color="#b4b4b4"/></linearGradient></defs>
<path d="M858.6 563.2 Q856.4 563.2 856.4 561 Q856.4 559 858.6 558.8 Q859.2 556 862 556 Q864.4 556 865.2 558.2 Q867.6 558.4 867.6 560.8 Q867.6 563.2 865.2 563.2 Z" fill="url(#cld)"/>
<g fill="none" stroke="#f0f0f0" stroke-width="1.2" stroke-linecap="round"><path d="M878.6 558.6 A7 7 0 0 1 888.4 558.6"/><path d="M880.4 560.6 A4.4 4.4 0 0 1 886.6 560.6"/><path d="M882 562.4 A2.2 2.2 0 0 1 885 562.4"/></g><circle cx="883.5" cy="563.8" r="0.8" fill="#f0f0f0"/>
<path d="M894 558.4 H896 L898.8 556 V564.4 L896 562 H894 Z" fill="none" stroke="#f0f0f0" stroke-width="0.9" stroke-linejoin="round"/><g fill="none" stroke="#f0f0f0" stroke-width="0.9" stroke-linecap="round"><path d="M900.4 558.4 A2.6 2.6 0 0 1 900.4 562"/><path d="M902 556.8 A4.8 4.8 0 0 1 902 563.6"/><path d="M903.6 555.4 A7 7 0 0 1 903.6 565"/></g>
<rect x="910" y="556.6" width="9.8" height="6.4" rx="1.4" fill="#e8e8e8"/><rect x="919.8" y="558.4" width="1.2" height="2.8" fill="#e8e8e8"/><path d="M911.6 554.6 L913 557.4 H911 L912.4 560" stroke="#e8e8e8" stroke-width="0.9" fill="none"/>
<g font-family="Liberation Sans, sans-serif" fill="#f4f4f4" font-size="7.5" text-anchor="end"><text x="968.6" y="557.2" textLength="33.4" lengthAdjust="spacingAndGlyphs">11:21 PM</text><text x="968.6" y="567.9" textLength="36.8" lengthAdjust="spacingAndGlyphs">6/20/2024</text></g>
<path d="M975 563 Q976.2 561.8 976.2 559.4 Q976.2 555.6 979 555.6 Q981.8 555.6 981.8 559.4 Q981.8 561.8 983 563 Z" fill="#8fe2ff"/><path d="M977.8 564 Q979 565.8 980.2 564 Z" fill="#8fe2ff"/>
<defs><linearGradient id="cpa" x1="0.2" y1="0" x2="0.3" y2="1"><stop offset="0" stop-color="#1e8ef0"/><stop offset="0.5" stop-color="#2fc6b0"/><stop offset="1" stop-color="#c8d83a"/></linearGradient><linearGradient id="cpb" x1="0.3" y1="0" x2="0.8" y2="1"><stop offset="0" stop-color="#2a62e8"/><stop offset="0.5" stop-color="#a45af0"/><stop offset="1" stop-color="#f0508c"/></linearGradient></defs>
<path d="M998.6 553 H1004.8 Q1002.9 553.8 1002.3 555.8 L1000.7 561.4 Q1000.1 563.5 998.1 563.5 H996.8 Q994.2 563.5 994.95 561 L996.7 555 Q997.3 553 998.6 553 Z" fill="url(#cpa)"/>
<path d="M1004.4 553 Q1006.7 553 1007.3 555 L1007.7 556.5 H1008.7 Q1011.3 556.5 1010.55 559 L1009.7 561.7 Q1009.1 563.7 1007.1 563.7 H1000.4 Q1002.5 563.1 1003.1 561.1 L1004.7 555.7 Q1005.1 553.7 1004.4 553 Z" fill="url(#cpb)"/>
<rect x="998.8" y="563.1" width="12.5" height="4.9" rx="1.3" fill="#f5c400"/><text x="1005.05" y="567" text-anchor="middle" font-family="Liberation Sans, sans-serif" font-weight="bold" font-size="4.2" fill="#1a1a1a">PRE</text>
</svg>
<span class="t" style="left:34.50px;top:549.16px;font-size:8.40px;line-height:10.08px;color:#f2f2f2;transform:scaleX(0.8861);">72°F</span>
<span class="t" style="left:34.50px;top:559.96px;font-size:8.40px;line-height:10.08px;color:#e6e6e6;transform:scaleX(0.8868);">Clear</span>
</body></html>
